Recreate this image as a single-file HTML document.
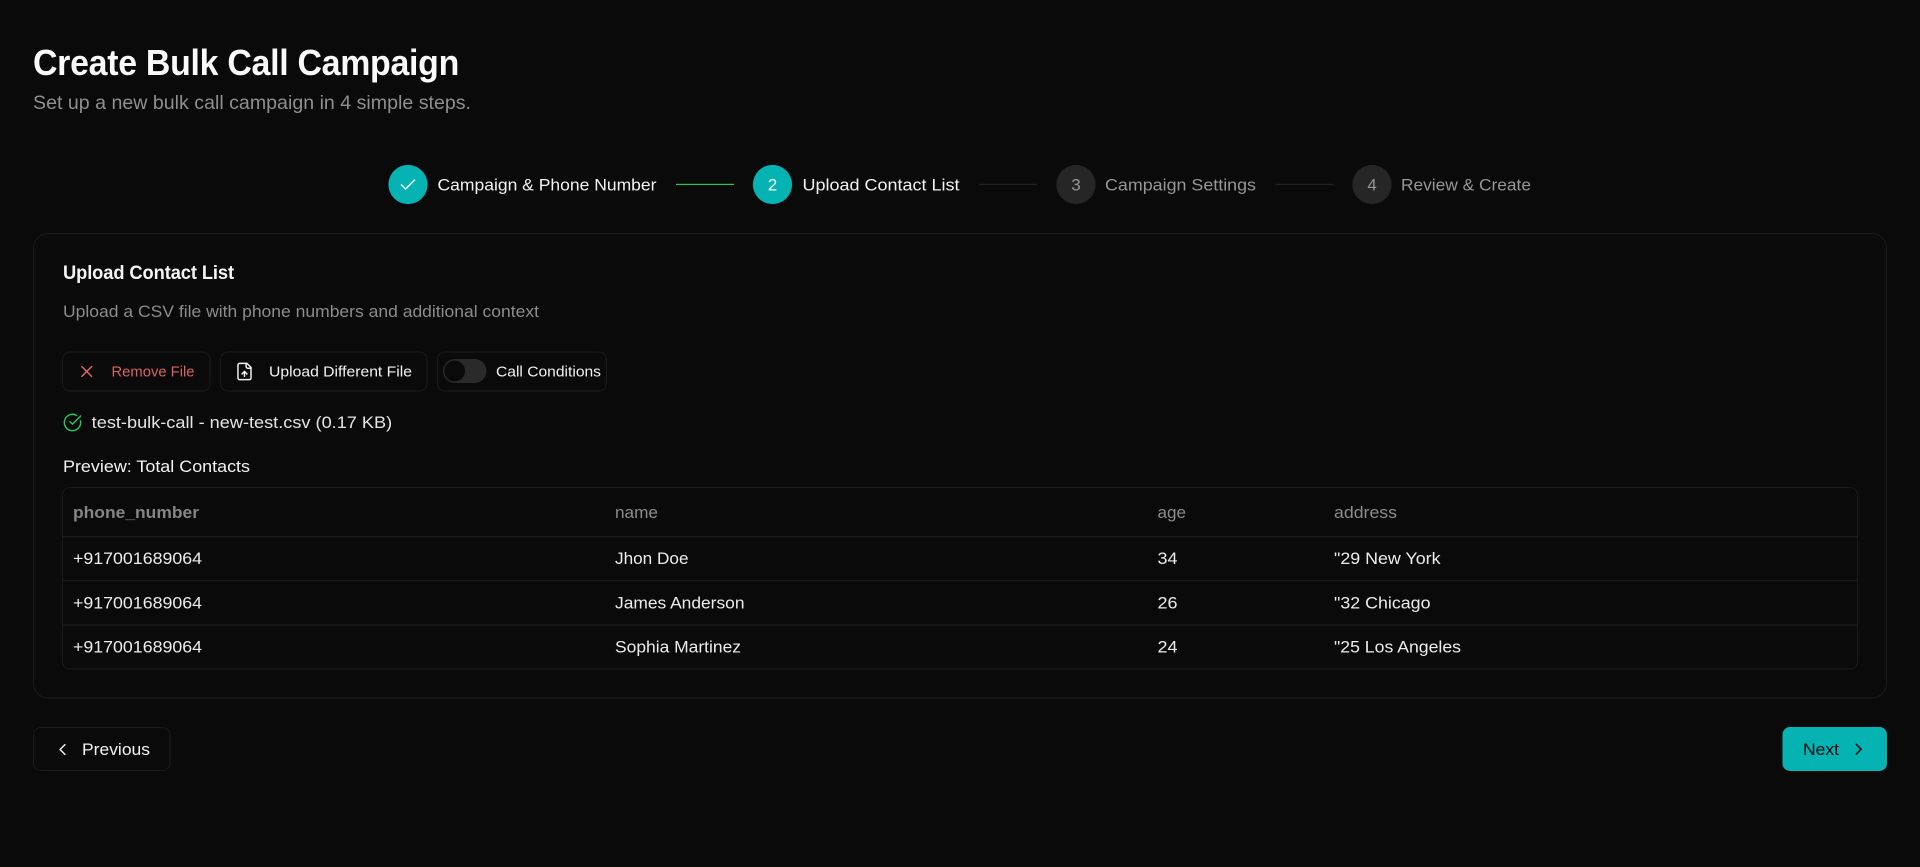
<!DOCTYPE html>
<html lang="en">
<head>
<meta charset="utf-8">
<title>Create Bulk Call Campaign</title>
<style>
html,body{margin:0;padding:0;background:#0a0a0a;width:1920px;height:867px;overflow:hidden}
svg{display:block}
text{font-family:"Liberation Sans",Arial,sans-serif;}
.ic{fill:none;stroke-linecap:round;stroke-linejoin:round;stroke-width:1.8}
</style>
</head>
<body>
<svg xmlns="http://www.w3.org/2000/svg" width="1920" height="867" viewBox="0 0 1920 867">
<rect width="1920" height="867" fill="#0a0a0a"/>

<text x="33" y="75" font-size="36" font-weight="700" fill="#fafafa" letter-spacing="-0.3" textLength="426" lengthAdjust="spacingAndGlyphs">Create Bulk Call Campaign</text>
<text x="33" y="109" font-size="19.2" fill="#8f8f8f" textLength="438" lengthAdjust="spacingAndGlyphs">Set up a new bulk call campaign in 4 simple steps.</text>

<circle cx="408" cy="184.5" r="19.6" fill="#05b3b3"/>
<g class="ic" stroke="#fafafa" transform="translate(398.2 175.1) scale(.816)"><path d="M20 6 9 17l-5-5"/></g>
<text x="437.5" y="190.5" font-size="16.8" fill="#f2f2f2" textLength="219" lengthAdjust="spacingAndGlyphs">Campaign &amp; Phone Number</text>
<rect x="676" y="183.8" width="58" height="1.2" fill="#22c55e"/>

<circle cx="772.5" cy="184.5" r="19.6" fill="#05b3b3"/>
<text x="772.5" y="190.5" font-size="16.8" fill="#fafafa" text-anchor="middle">2</text>
<text x="802.5" y="190.5" font-size="16.8" fill="#f2f2f2" textLength="157" lengthAdjust="spacingAndGlyphs">Upload Contact List</text>
<rect x="979" y="183.8" width="58" height="1.2" fill="#232323"/>

<circle cx="1076" cy="184.5" r="19.6" fill="#262626"/>
<text x="1076" y="190.5" font-size="16.8" fill="#969696" text-anchor="middle">3</text>
<text x="1105" y="190.5" font-size="16.8" fill="#969696" textLength="151" lengthAdjust="spacingAndGlyphs">Campaign Settings</text>
<rect x="1275.5" y="183.8" width="58" height="1.2" fill="#232323"/>

<circle cx="1372" cy="184.5" r="19.6" fill="#262626"/>
<text x="1372" y="190.5" font-size="16.8" fill="#969696" text-anchor="middle">4</text>
<text x="1401" y="190.5" font-size="16.8" fill="#969696" textLength="130" lengthAdjust="spacingAndGlyphs">Review &amp; Create</text>

<rect x="33.5" y="233.5" width="1853" height="464.5" rx="14.7" fill="#0a0a0a" stroke="#1c1c1c"/>
<text x="63" y="279" font-size="19.2" font-weight="700" fill="#f5f5f5" letter-spacing="-0.1" textLength="171" lengthAdjust="spacingAndGlyphs">Upload Contact List</text>
<text x="63" y="317" font-size="16.8" fill="#8c8c8c" textLength="476" lengthAdjust="spacingAndGlyphs">Upload a CSV file with phone numbers and additional context</text>

<rect x="62.5" y="352" width="147.5" height="39" rx="7.5" fill="#0a0a0a" stroke="#1c1c1c"/>
<g class="ic" stroke="#e06666" transform="translate(76.9 361.7) scale(.816)"><path d="M18 6 6 18M6 6l12 12"/></g>
<text x="111.5" y="376.5" font-size="14.4" fill="#d96262" textLength="83" lengthAdjust="spacingAndGlyphs">Remove File</text>

<rect x="220.5" y="352" width="206.5" height="39" rx="7.5" fill="#0a0a0a" stroke="#1c1c1c"/>
<g class="ic" stroke="#f2f2f2" transform="translate(234.7 361.7) scale(.816)"><path d="M15 2H6a2 2 0 0 0-2 2v16a2 2 0 0 0 2 2h12a2 2 0 0 0 2-2V7Z"/><path d="M14 2v4a2 2 0 0 0 2 2h4"/><path d="M12 12v6"/><path d="m15 15-3-3-3 3"/></g>
<text x="269" y="376.5" font-size="14.4" fill="#f2f2f2" textLength="143" lengthAdjust="spacingAndGlyphs">Upload Different File</text>

<rect x="437.5" y="352" width="169" height="39" rx="7.5" fill="#0a0a0a" stroke="#1c1c1c"/>
<rect x="443" y="359" width="43.5" height="24" rx="12" fill="#2a2a2a"/>
<circle cx="454.7" cy="371" r="10.4" fill="#0a0a0a"/>
<text x="496" y="376.5" font-size="14.4" fill="#f2f2f2" textLength="105" lengthAdjust="spacingAndGlyphs">Call Conditions</text>

<g class="ic" stroke="#22c55e" transform="translate(62.7 412.7) scale(.816)"><path d="M21.801 10A10 10 0 1 1 17 3.335"/><path d="m9 11 3 3L22 4"/></g>
<text x="91.7" y="428" font-size="16.8" fill="#e4e4e4" textLength="300.5" lengthAdjust="spacingAndGlyphs">test-bulk-call - new-test.csv (0.17 KB)</text>
<text x="63" y="472" font-size="16.8" fill="#f2f2f2" textLength="187" lengthAdjust="spacingAndGlyphs">Preview: Total Contacts</text>

<rect x="62.5" y="487.5" width="1795" height="181.5" rx="7.5" fill="#0a0a0a" stroke="#1c1c1c"/>
<rect x="63" y="536" width="1794" height="1.1" fill="#1c1c1c"/>
<rect x="63" y="580" width="1794" height="1.1" fill="#1c1c1c"/>
<rect x="63" y="624.5" width="1794" height="1.1" fill="#1c1c1c"/>

<text x="73" y="518" font-size="16.8" font-weight="700" fill="#858585" textLength="126" lengthAdjust="spacingAndGlyphs">phone_number</text>
<text x="615" y="518" font-size="16.8" fill="#8c8c8c" textLength="43" lengthAdjust="spacingAndGlyphs">name</text>
<text x="1157.5" y="518" font-size="16.8" fill="#8c8c8c" textLength="28.5" lengthAdjust="spacingAndGlyphs">age</text>
<text x="1334" y="518" font-size="16.8" fill="#8c8c8c" textLength="63" lengthAdjust="spacingAndGlyphs">address</text>

<text x="73" y="564" font-size="16.8" fill="#ececec" textLength="129" lengthAdjust="spacingAndGlyphs">+917001689064</text>
<text x="615" y="564" font-size="16.8" fill="#ececec" textLength="73.5" lengthAdjust="spacingAndGlyphs">Jhon Doe</text>
<text x="1157.5" y="564" font-size="16.8" fill="#ececec" textLength="20" lengthAdjust="spacingAndGlyphs">34</text>
<text x="1334" y="564" font-size="16.8" fill="#ececec" textLength="106.5" lengthAdjust="spacingAndGlyphs">"29 New York</text>

<text x="73" y="608.5" font-size="16.8" fill="#ececec" textLength="129" lengthAdjust="spacingAndGlyphs">+917001689064</text>
<text x="615" y="608.5" font-size="16.8" fill="#ececec" textLength="129.5" lengthAdjust="spacingAndGlyphs">James Anderson</text>
<text x="1157.5" y="608.5" font-size="16.8" fill="#ececec" textLength="20" lengthAdjust="spacingAndGlyphs">26</text>
<text x="1334" y="608.5" font-size="16.8" fill="#ececec" textLength="96.5" lengthAdjust="spacingAndGlyphs">"32 Chicago</text>

<text x="73" y="652.5" font-size="16.8" fill="#ececec" textLength="129" lengthAdjust="spacingAndGlyphs">+917001689064</text>
<text x="615" y="652.5" font-size="16.8" fill="#ececec" textLength="126" lengthAdjust="spacingAndGlyphs">Sophia Martinez</text>
<text x="1157.5" y="652.5" font-size="16.8" fill="#ececec" textLength="20" lengthAdjust="spacingAndGlyphs">24</text>
<text x="1334" y="652.5" font-size="16.8" fill="#ececec" textLength="127" lengthAdjust="spacingAndGlyphs">"25 Los Angeles</text>

<rect x="33.5" y="727.5" width="136.5" height="43" rx="7.5" fill="#0a0a0a" stroke="#1c1c1c"/>
<g class="ic" stroke="#f2f2f2" transform="translate(52.7 739.7) scale(.816)"><path d="m15 18-6-6 6-6"/></g>
<text x="82" y="755" font-size="16.8" fill="#f2f2f2" textLength="68" lengthAdjust="spacingAndGlyphs">Previous</text>

<rect x="1782.5" y="727" width="104.5" height="44" rx="7.5" fill="#05b3b3"/>
<text x="1803" y="755" font-size="16.8" fill="#0a0a0a" textLength="36" lengthAdjust="spacingAndGlyphs">Next</text>
<g class="ic" stroke="#0a0a0a" transform="translate(1848.9 739.4) scale(.816)"><path d="m9 18 6-6-6-6"/></g>
</svg>
</body>
</html>
